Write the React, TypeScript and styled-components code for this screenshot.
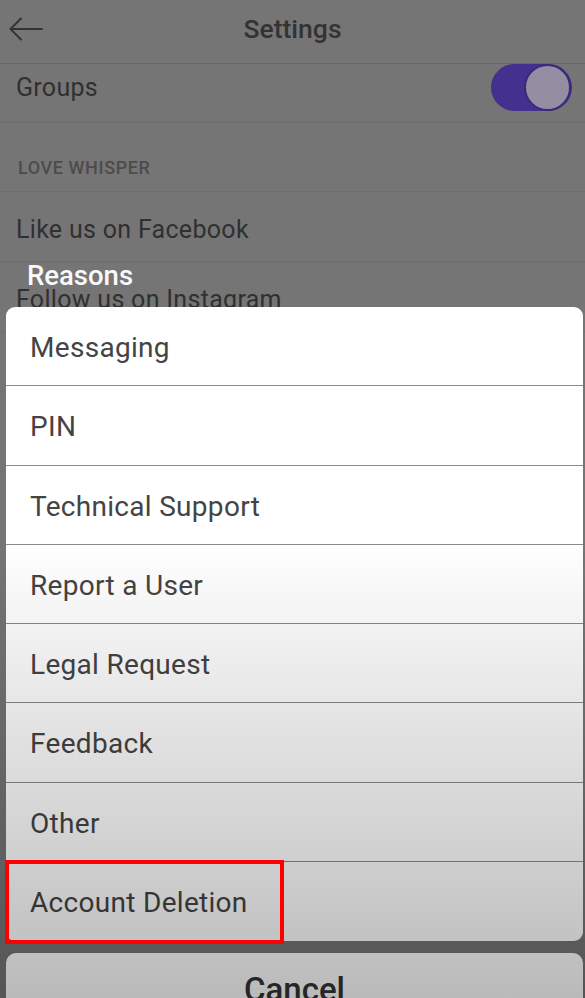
import styled, { createGlobalStyle } from 'styled-components';

const reasons = [
  'Messaging',
  'PIN',
  'Technical Support',
  'Report a User',
  'Legal Request',
  'Feedback',
  'Other',
  'Account Deletion',
];

export default function App() {
  return (
    <>
      <GlobalStyle />
      <Screen>
        <SettingsPage>
          <Header>
            <BackButton aria-label="Back">
              <svg width="36" height="24" viewBox="0 0 36 24" fill="none">
                <path d="M34 12H2.5M13 1.5L2.5 12L13 22.5" stroke="#333" strokeWidth="2" strokeLinecap="round" strokeLinejoin="round" />
              </svg>
            </BackButton>
            <HeaderTitle>Settings</HeaderTitle>
            <span />
          </Header>
          <SettingRow $height={59} $padTop={0} $padBottom={12}>
            <RowLabel>Groups</RowLabel>
            <Toggle aria-checked role="switch">
              <Knob />
            </Toggle>
          </SettingRow>
          <SectionLabel>Love Whisper</SectionLabel>
          <SettingRow $height={70} $padTop={5} $padBottom={0}>
            <RowLabel>Like us on Facebook</RowLabel>
          </SettingRow>
          <SettingRow $height={70} $padTop={5} $padBottom={0}>
            <RowLabel>Follow us on Instagram</RowLabel>
          </SettingRow>
        </SettingsPage>

        <Overlay>
          <SheetTitle>Reasons</SheetTitle>
          <Sheet>
            {reasons.map((r) => (
              <ReasonRow key={r}>
                {r}
                {r === 'Account Deletion' && <Highlight />}
              </ReasonRow>
            ))}
          </Sheet>
          <CancelButton>Cancel</CancelButton>
        </Overlay>

        <Shade />
      </Screen>
    </>
  );
}

const GlobalStyle = createGlobalStyle`
  html, body {
    margin: 0;
    background: #757575;
    font-family: Roboto, "Open Sans", sans-serif;
    overflow: hidden;
  }
`;

const Screen = styled.div`
  position: relative;
  height: 998px;
  overflow: hidden;
  background: #757575;
`;

const SettingsPage = styled.div`
  display: flex;
  flex-direction: column;
  color: #303030;
`;

const Header = styled.header`
  display: grid;
  grid-template-columns: 50px 1fr 50px;
  align-items: center;
  height: 57px;
  padding-bottom: 6px;
  border-bottom: 1px solid #686868;
`;

const BackButton = styled.button`
  border: 0;
  background: none;
  padding: 0 0 0 8px;
  display: flex;
  align-items: center;
`;

const HeaderTitle = styled.h1`
  margin: 0;
  text-align: center;
  font-size: 26.5px;
  font-weight: 500;
  color: #333;
`;

const SettingRow = styled.div<{ $height: number; $padTop: number; $padBottom: number }>`
  display: flex;
  align-items: center;
  justify-content: space-between;
  height: ${(p) => p.$height}px;
  box-sizing: border-box;
  padding: ${(p) => p.$padTop}px 13px ${(p) => p.$padBottom}px 16px;
  border-bottom: 1px solid #6e6e6e;
`;

const RowLabel = styled.span`
  font-size: 25px;
  color: #303030;
  letter-spacing: 0.3px;
`;

const SectionLabel = styled.div`
  display: flex;
  align-items: flex-end;
  height: 69px;
  box-sizing: border-box;
  padding: 0 0 13px 18px;
  font-size: 18px;
  font-weight: 500;
  letter-spacing: 0.6px;
  text-transform: uppercase;
  color: #4c4c4c;
  border-bottom: 1px solid #6e6e6e;
`;

const Toggle = styled.div`
  display: flex;
  justify-content: flex-end;
  align-items: center;
  width: 81px;
  height: 47px;
  border-radius: 24px;
  background: #44308e;
  box-sizing: border-box;
  padding: 1px;
`;

const Knob = styled.div`
  width: 43px;
  height: 43px;
  border-radius: 50%;
  background: #958ea2;
  border: 2px solid #3a2a78;
`;

const Overlay = styled.div`
  position: absolute;
  inset: 0;
  display: flex;
  flex-direction: column;
  padding: 260px 2px 0 6px;
  > * {
    flex-shrink: 0;
  }
`;

const SheetTitle = styled.div`
  font-size: 27.5px;
  line-height: 32px;
  font-weight: 500;
  color: #fafafa;
  padding-left: 21px;
  margin-bottom: 15px;
`;

const Sheet = styled.div`
  background: #fff;
  border-radius: 9px;
`;

const ReasonRow = styled.div`
  position: relative;
  display: flex;
  align-items: center;
  height: 79.25px;
  box-sizing: border-box;
  padding: 3px 0 0 24px;
  font-size: 28px;
  color: #444;
  letter-spacing: 0.3px;
  border-bottom: 1.5px solid #8a8a8a;
  &:last-child {
    border-bottom: 0;
  }
`;

/* annotation box drawn on top of the bottom shade */
const Highlight = styled.div`
  position: absolute;
  z-index: 2;
  left: -1px;
  top: -2px;
  width: 279px;
  height: 84px;
  box-sizing: border-box;
  border: 4px solid #ff0000;
`;

const CancelButton = styled.button`
  margin-top: 12px;
  height: 72px;
  border: 0;
  border-radius: 10px;
  background: #fff;
  font-family: Roboto, "Open Sans", sans-serif;
  font-size: 33px;
  font-weight: 500;
  color: #333;
  padding: 0;
`;

const Shade = styled.div`
  position: absolute;
  z-index: 1;
  inset: 0;
  pointer-events: none;
  background: linear-gradient(
    to bottom,
    rgba(0, 0, 0, 0) 0px,
    rgba(0, 0, 0, 0) 540px,
    rgba(0, 0, 0, 0.27) 998px
  );
`;
